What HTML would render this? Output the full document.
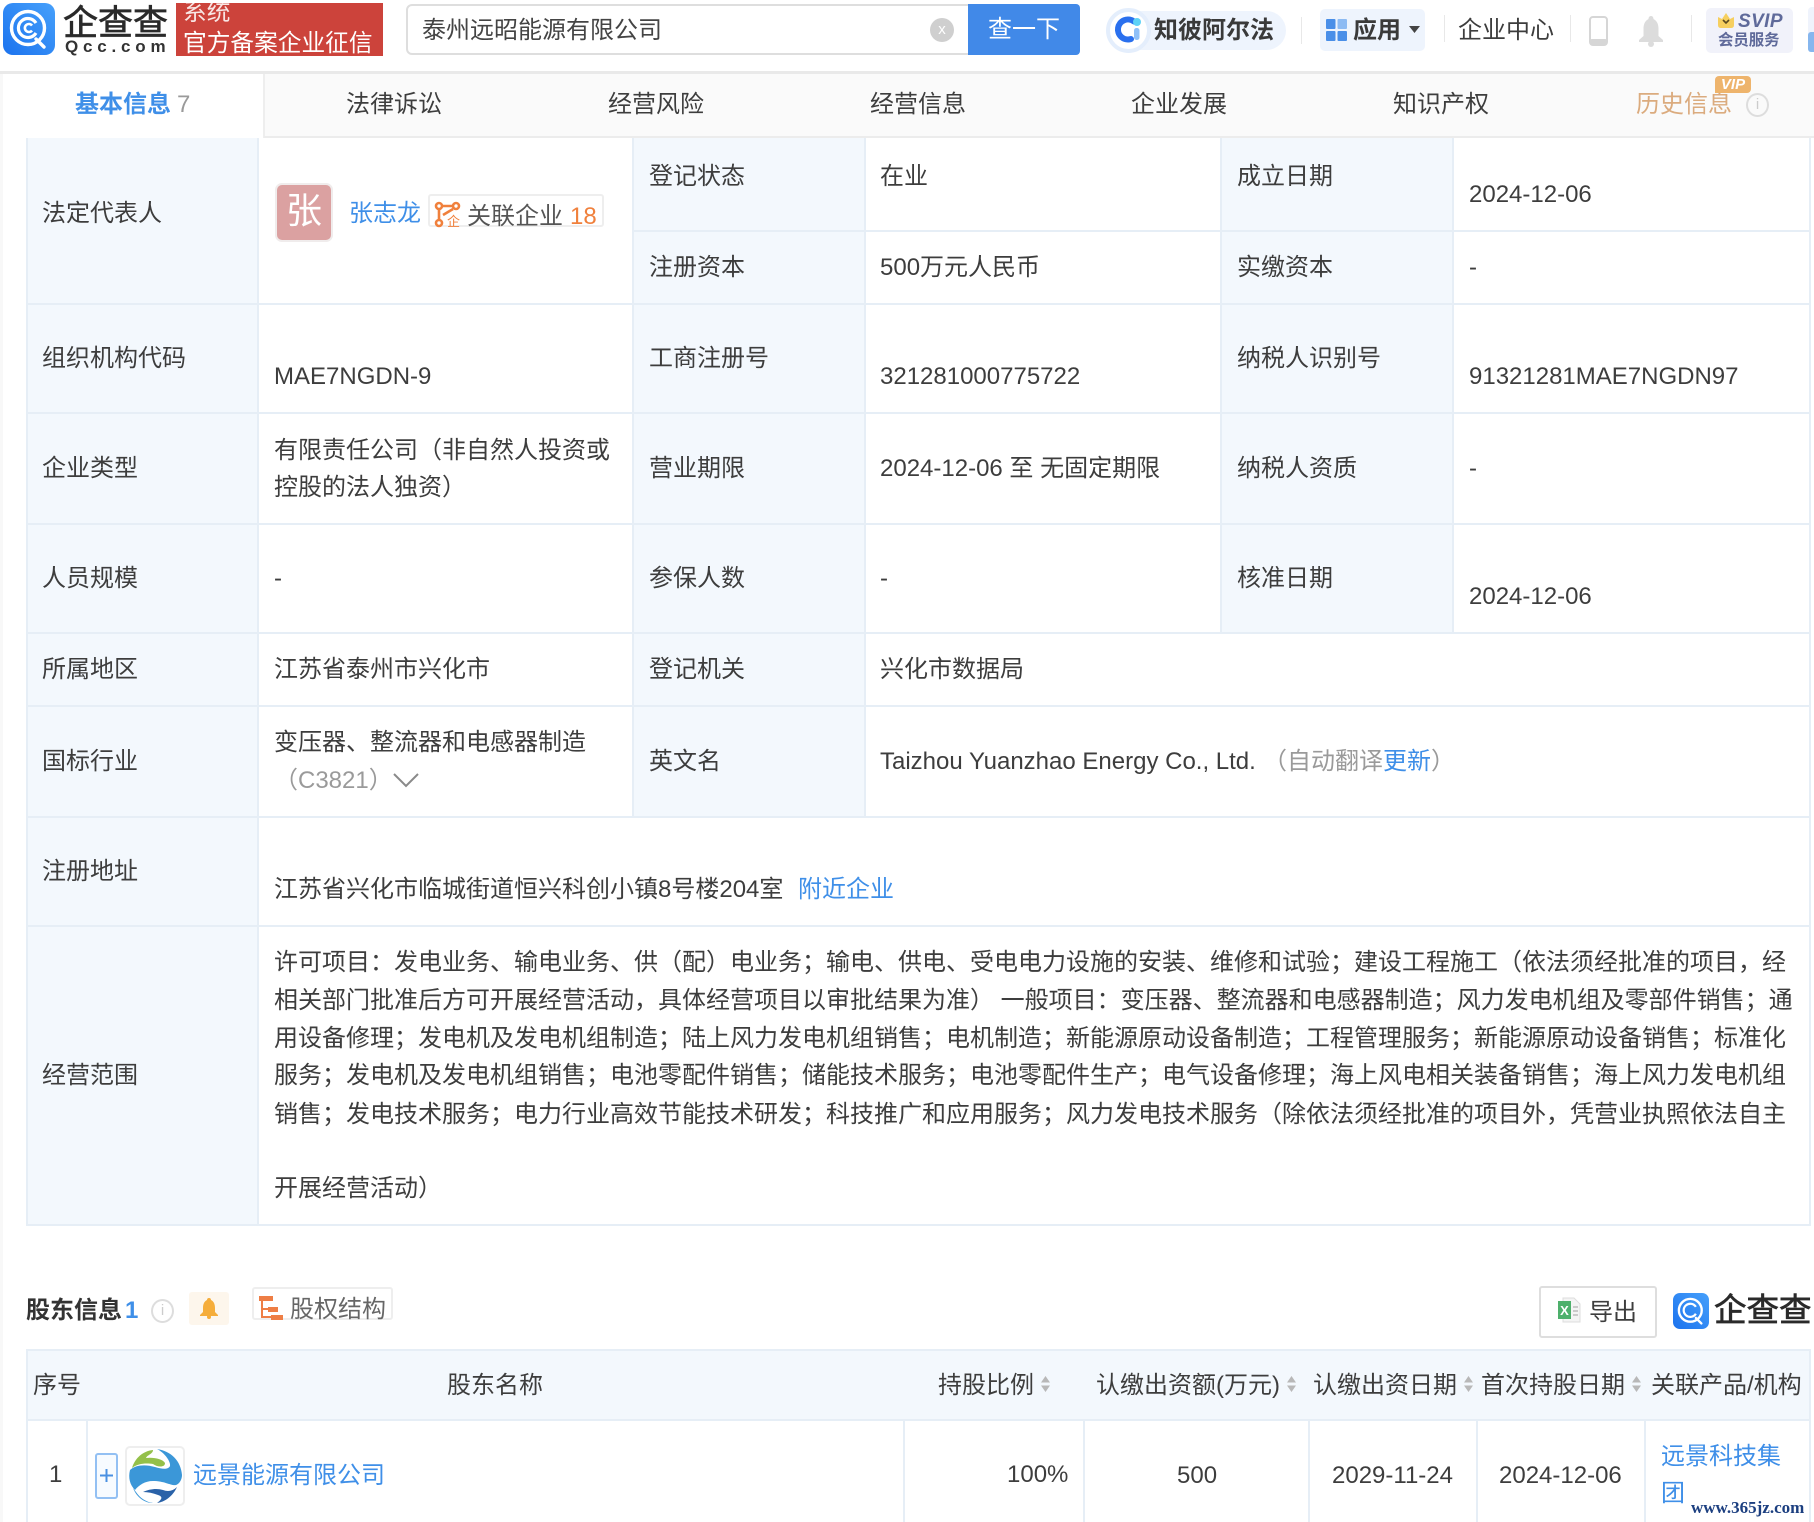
<!DOCTYPE html>
<html lang="zh"><head><meta charset="utf-8"><title>泰州远昭能源有限公司</title>
<style>
html,body{margin:0;padding:0;background:#fff}
#p{position:relative;width:1814px;height:1522px;overflow:hidden;background:#fff;font-family:"Liberation Sans","Noto Sans CJK SC",sans-serif;font-size:24px;color:#3d3d3d;filter:blur(.35px)}
.t{position:absolute;line-height:30px;margin-top:-13px;white-space:nowrap}
.b{position:absolute;box-sizing:border-box}
.l{position:absolute;background:#e6eef6}
.c{color:#3f8fe8}
.g{color:#9a9a9a}
svg{position:absolute;overflow:visible}
</style></head><body><div id="p">

<!-- header -->
<div class="b" style="left:0;top:72px;width:3px;height:1450px;background:#f8f8f8"></div>
<div class="b" style="left:0;top:71px;width:1814px;height:3px;background:#e9e9e9"></div>
<svg style="left:3px;top:3px" width="52" height="52" viewBox="0 0 52 52"><defs><linearGradient id="lg" x1="0" y1="1" x2="1" y2="0"><stop offset="0" stop-color="#1c73ee"/><stop offset="1" stop-color="#46a0fb"/></linearGradient></defs><rect width="52" height="52" rx="10" fill="url(#lg)"/><circle cx="25" cy="25" r="16.5" fill="none" stroke="#fff" stroke-width="3.4"/><path d="M33 36L41 44" stroke="#fff" stroke-width="3.4" stroke-linecap="round"/><path d="M33 20A9.5 9.5 0 1 0 33 30" fill="none" stroke="#fff" stroke-width="3.2"/><path d="M29 22.500A4 4 0 1 0 29 27.500" fill="none" stroke="#fff" stroke-width="2.600"/></svg>
<span class="t" style="left:63px;top:22px;font-size:35px;color:#2a2a2a;-webkit-text-stroke:.7px #2a2a2a">企查查</span>
<span class="t" style="left:65px;top:45px;font-size:17px;letter-spacing:4.8px;color:#333;font-weight:700">Qcc.com</span>
<div class="b" style="left:176px;top:3px;width:207px;height:53px;background:#cc433b;overflow:hidden;color:#fff"><span class="t" style="left:7px;top:8px;color:#f8e6e4;font-size:23.7px">系统</span><span class="t" style="left:7px;top:39px;color:#fff;font-size:23.7px">官方备案企业征信</span></div>

<div class="b" style="left:406px;top:4px;width:564px;height:51px;border:2px solid #dedede;border-radius:6px 0 0 6px"></div>
<span class="t" style="left:422px;top:29px;color:#444">泰州远昭能源有限公司</span>
<div class="b" style="left:930px;top:18px;width:24px;height:24px;border-radius:50%;background:#cfcfcf;color:#fff;font-size:15px;line-height:24px;text-align:center">x</div>
<div class="b" style="left:968px;top:4px;width:112px;height:51px;background:#4189e8;border-radius:0 4px 4px 0;color:#fff;text-align:center;line-height:52px">查一下</div>

<div class="b" style="left:1116px;top:11px;width:170px;height:39px;background:#eef4fd;border-radius:20px"></div>
<div class="b" style="left:1106px;top:8px;width:45px;height:45px;background:#fff;border:4px solid #e4eefc;border-radius:50%"></div>
<svg style="left:1114px;top:15px" width="30" height="30" viewBox="0 0 30 30"><path d="M20 6.500A10 10 0 1 0 17 24" fill="none" stroke="#2a70ee" stroke-width="6" stroke-linecap="round"/><circle cx="23" cy="7" r="4" fill="#5fd2f6"/><rect x="20" y="13" width="5.500" height="12" rx="2.500" fill="#8fc0f8"/></svg>
<span class="t" style="left:1154px;top:29px;font-weight:700;color:#3a3a3a">知彼阿尔法</span>
<div class="b" style="left:1301px;top:17px;width:1px;height:27px;background:#e8e8e8"></div>

<div class="b" style="left:1320px;top:9px;width:105px;height:42px;background:#eef4fd;border-radius:5px"></div>
<svg style="left:1326px;top:19px" width="21" height="22" viewBox="0 0 21 22"><g fill="#4a8fe8"><rect width="9.500" height="10" rx="1"/><rect x="11.500" width="9.500" height="10" rx="1" fill="#8dbbf3"/><rect y="12" width="9.500" height="10" rx="1"/><rect x="11.500" y="12" width="9.500" height="10" rx="1"/></g></svg>
<span class="t" style="left:1353px;top:29px;font-weight:700;color:#3a3a3a">应用</span>
<svg style="left:1409px;top:26px" width="12" height="8" viewBox="0 0 12 8"><path d="M0 0H11L5.500 7Z" fill="#444"/></svg>
<div class="b" style="left:1444px;top:15px;width:1px;height:27px;background:#e8e8e8"></div>
<span class="t" style="left:1458px;top:29px">企业中心</span>
<div class="b" style="left:1570px;top:15px;width:1px;height:27px;background:#e8e8e8"></div>
<svg style="left:1589px;top:16px" width="19" height="30" viewBox="0 0 19 30"><rect x="1" y="1" width="17" height="28" rx="3" fill="#fff" stroke="#d6d6d6" stroke-width="2"/><rect x="1" y="23" width="17" height="6" rx="2" fill="#d6d6d6"/></svg>
<svg style="left:1639px;top:16px" width="24" height="31" viewBox="0 0 24 31"><path d="M12 0C14 0 14.500 2 14.500 3C18.500 5 19.500 9 19.500 13V20L24 24V26H0V24L4.500 20V13C4.500 9 5.500 5 9.500 3C9.500 2 10 0 12 0Z" fill="#dcdcdc"/><circle cx="12" cy="28" r="3" fill="#dcdcdc"/></svg>
<div class="b" style="left:1691px;top:15px;width:1px;height:27px;background:#e8e8e8"></div>
<div class="b" style="left:1706px;top:8px;width:87px;height:45px;background:#f1f2fa;border-radius:5px"></div>
<svg style="left:1718px;top:13px" width="16" height="15" viewBox="0 0 16 15"><path d="M0 4L4 6L8 0L12 6L16 4V12Q16 15 13 15H3Q0 15 0 12Z" fill="#f6cf5f"/><path d="M5 7L8 10L11 7" fill="none" stroke="#5a4a20" stroke-width="1.600"/></svg>
<span class="t" style="left:1738px;top:20px;font-size:19px;font-weight:700;font-style:italic;color:#5f6a9a;letter-spacing:.4px">SVIP</span>
<span class="t" style="left:1718px;top:39px;font-size:15.400px;font-weight:700;color:#5f6a9a">会员服务</span>
<div class="b" style="left:1808px;top:7px;width:6px;height:45px;background:#eff3fc;border-radius:4px 0 0 4px"></div>
<div class="b" style="left:1808px;top:32px;width:6px;height:20px;background:#86b6ee;border-radius:3px 0 0 3px"></div>

<!-- tabs -->
<div class="b" style="left:264px;top:74px;width:1550px;height:63px;background:#fafafa"></div>
<div class="b" style="left:3px;top:74px;width:261px;height:64px;background:#fff"></div>
<div class="b" style="left:263px;top:74px;width:2px;height:64px;background:#eee"></div>
<div class="b" style="left:264px;top:136px;width:1550px;height:2px;background:#ececec"></div>
<span class="t c" style="left:75px;top:103px;font-weight:700">基本信息</span>
<span class="t g" style="left:177px;top:103px">7</span>
<span class="t" style="left:346px;top:103px">法律诉讼</span>
<span class="t" style="left:608px;top:103px">经营风险</span>
<span class="t" style="left:870px;top:103px">经营信息</span>
<span class="t" style="left:1131px;top:103px">企业发展</span>
<span class="t" style="left:1393px;top:103px">知识产权</span>
<span class="t" style="left:1636px;top:103px;color:#dbab7e">历史信息</span>
<div class="b" style="left:1715px;top:76px;width:36px;height:17px;background:#eeb46c;border-radius:4px 4px 4px 0;color:#fff;font-size:15px;font-weight:700;font-style:italic;line-height:17px;text-align:center">VIP</div>
<div class="b" style="left:1746px;top:93px;width:23px;height:24px;border:2px solid #ddd;border-radius:50%;color:#ccc;font-size:15px;line-height:20px;text-align:center">i</div>

<!-- table 1 backgrounds -->
<div class="b" style="left:27px;top:138px;width:231px;height:1086px;background:#f3f8fd"></div>
<div class="b" style="left:633px;top:138px;width:232px;height:679px;background:#f3f8fd"></div>
<div class="b" style="left:1220px;top:138px;width:233px;height:494px;background:#f3f8fd"></div>
<!-- vertical lines -->
<div class="l" style="left:26px;top:138px;width:2px;height:1087px"></div>
<div class="l" style="left:257px;top:138px;width:2px;height:1087px"></div>
<div class="l" style="left:632px;top:138px;width:2px;height:679px"></div>
<div class="l" style="left:864px;top:138px;width:2px;height:679px"></div>
<div class="l" style="left:1220px;top:138px;width:2px;height:495px"></div>
<div class="l" style="left:1452px;top:138px;width:2px;height:495px"></div>
<div class="l" style="left:1809px;top:138px;width:2px;height:1087px"></div>
<!-- horizontal lines -->
<div class="l" style="left:633px;top:230px;width:1178px;height:2px"></div>
<div class="l" style="left:26px;top:303px;width:1785px;height:2px"></div>
<div class="l" style="left:26px;top:412px;width:1785px;height:2px"></div>
<div class="l" style="left:26px;top:523px;width:1785px;height:2px"></div>
<div class="l" style="left:26px;top:632px;width:1785px;height:2px"></div>
<div class="l" style="left:26px;top:705px;width:1785px;height:2px"></div>
<div class="l" style="left:26px;top:816px;width:1785px;height:2px"></div>
<div class="l" style="left:26px;top:925px;width:1785px;height:2px"></div>
<div class="l" style="left:26px;top:1224px;width:1785px;height:2px"></div>

<!-- row 1 -->
<span class="t" style="left:42px;top:212px">法定代表人</span>
<div class="b" style="left:275px;top:183px;width:58px;height:59px;background:#dba1a1;border:2px solid #f0ecec;border-radius:7px;color:#fff;font-size:36px;line-height:51px;text-align:center">张</div>
<span class="t c" style="left:349px;top:212px">张志龙</span>
<div class="b" style="left:428px;top:194px;width:176px;height:33px;border:2px solid #eee;border-radius:3px"></div>
<svg style="left:435px;top:202px" width="25" height="25" viewBox="0 0 25 25"><g fill="none" stroke="#f0803c" stroke-width="2.600"><circle cx="4" cy="4" r="3"/><circle cx="21" cy="4" r="3"/><circle cx="4" cy="21" r="3"/><path d="M7 4H18M4 7V18M18 7L8 13"/></g><text x="12" y="24" font-size="13" fill="#f0803c" font-family="Liberation Sans,Noto Sans CJK SC,sans-serif">企</text></svg>
<span class="t" style="left:467px;top:215px;color:#555">关联企业</span>
<span class="t" style="left:570px;top:215px;color:#f0803c">18</span>
<span class="t" style="left:649px;top:175px">登记状态</span>
<span class="t" style="left:880px;top:175px">在业</span>
<span class="t" style="left:1237px;top:175px">成立日期</span>
<span class="t" style="left:1469px;top:193px">2024-12-06</span>
<span class="t" style="left:649px;top:266px">注册资本</span>
<span class="t" style="left:880px;top:266px">500万元人民币</span>
<span class="t" style="left:1237px;top:266px">实缴资本</span>
<span class="t" style="left:1469px;top:266px">-</span>
<!-- row 2 -->
<span class="t" style="left:42px;top:357px">组织机构代码</span>
<span class="t" style="left:274px;top:375px">MAE7NGDN-9</span>
<span class="t" style="left:649px;top:357px">工商注册号</span>
<span class="t" style="left:880px;top:375px">321281000775722</span>
<span class="t" style="left:1237px;top:357px">纳税人识别号</span>
<span class="t" style="left:1469px;top:375px">91321281MAE7NGDN97</span>
<!-- row 3 -->
<span class="t" style="left:42px;top:467px">企业类型</span>
<span class="t" style="left:274px;top:449px">有限责任公司（非自然人投资或</span>
<span class="t" style="left:274px;top:486px">控股的法人独资）</span>
<span class="t" style="left:649px;top:467px">营业期限</span>
<span class="t" style="left:880px;top:467px">2024-12-06 至 无固定期限</span>
<span class="t" style="left:1237px;top:467px">纳税人资质</span>
<span class="t" style="left:1469px;top:467px">-</span>
<!-- row 4 -->
<span class="t" style="left:42px;top:577px">人员规模</span>
<span class="t" style="left:274px;top:577px">-</span>
<span class="t" style="left:649px;top:577px">参保人数</span>
<span class="t" style="left:880px;top:577px">-</span>
<span class="t" style="left:1237px;top:577px">核准日期</span>
<span class="t" style="left:1469px;top:595px">2024-12-06</span>
<!-- row 5 -->
<span class="t" style="left:42px;top:668px">所属地区</span>
<span class="t" style="left:274px;top:668px">江苏省泰州市兴化市</span>
<span class="t" style="left:649px;top:668px">登记机关</span>
<span class="t" style="left:880px;top:668px">兴化市数据局</span>
<!-- row 6 -->
<span class="t" style="left:42px;top:760px">国标行业</span>
<span class="t" style="left:274px;top:741px">变压器、整流器和电感器制造</span>
<span class="t g" style="left:274px;top:779px">（C3821）</span>
<svg style="left:393px;top:773px" width="26" height="14" viewBox="0 0 26 14"><path d="M1 1L13 13L25 1" fill="none" stroke="#8a8a8a" stroke-width="2"/></svg>
<span class="t" style="left:649px;top:760px">英文名</span>
<span class="t" style="left:880px;top:760px">Taizhou Yuanzhao Energy Co., Ltd.</span>
<span class="t g" style="left:1263px;top:760px">（自动翻译<span class="c">更新</span>）</span>
<!-- row 7 -->
<span class="t" style="left:42px;top:870px">注册地址</span>
<span class="t" style="left:274px;top:888px">江苏省兴化市临城街道恒兴科创小镇8号楼204室</span>
<span class="t c" style="left:798px;top:888px">附近企业</span>
<!-- row 8 -->
<span class="t" style="left:42px;top:1074px">经营范围</span>
<span class="t" style="left:274px;top:961px">许可项目：发电业务、输电业务、供（配）电业务；输电、供电、受电电力设施的安装、维修和试验；建设工程施工（依法须经批准的项目，经</span>
<span class="t" style="left:274px;top:999px">相关部门批准后方可开展经营活动，具体经营项目以审批结果为准） 一般项目：变压器、整流器和电感器制造；风力发电机组及零部件销售；通</span>
<span class="t" style="left:274px;top:1037px">用设备修理；发电机及发电机组制造；陆上风力发电机组销售；电机制造；新能源原动设备制造；工程管理服务；新能源原动设备销售；标准化</span>
<span class="t" style="left:274px;top:1074px">服务；发电机及发电机组销售；电池零配件销售；储能技术服务；电池零配件生产；电气设备修理；海上风电相关装备销售；海上风力发电机组</span>
<span class="t" style="left:274px;top:1113px">销售；发电技术服务；电力行业高效节能技术研发；科技推广和应用服务；风力发电技术服务（除依法须经批准的项目外，凭营业执照依法自主</span>
<span class="t" style="left:274px;top:1187px">开展经营活动）</span>

<!-- section 2 -->
<span class="t" style="left:26px;top:1309px;font-weight:700;color:#333">股东信息</span>
<span class="t c" style="left:125px;top:1309px;font-weight:700">1</span>
<div class="b" style="left:151px;top:1299px;width:23px;height:24px;border:2px solid #ddd;border-radius:50%;color:#ccc;font-size:15px;line-height:20px;text-align:center">i</div>
<div class="b" style="left:189px;top:1292px;width:40px;height:33px;background:#fdf6ec;border-radius:3px"></div>
<svg style="left:199px;top:1298px" width="20" height="21" viewBox="0 0 20 21"><path d="M10 0C11.500 0 12 1 12 2C15 3.500 16 6.500 16 10V14L19 17V18H1V17L4 14V10C4 6.500 5 3.500 8 2C8 1 8.500 0 10 0Z" fill="#f5ad3b"/><circle cx="10" cy="19" r="2" fill="#f5ad3b"/></svg>
<div class="b" style="left:252px;top:1287px;width:141px;height:33px;border:2px solid #eee;border-radius:3px"></div>
<svg style="left:259px;top:1296px" width="24" height="24" viewBox="0 0 24 24"><g fill="#ee7e45"><rect width="14" height="5"/><rect x="2" y="5" width="2" height="17"/><rect x="9" y="11" width="10" height="5"/><rect x="12" y="19" width="12" height="5"/><rect x="2" y="12" width="8" height="2"/><rect x="2" y="20" width="10" height="2"/></g></svg>
<span class="t" style="left:290px;top:1308px;color:#666">股权结构</span>
<div class="b" style="left:1539px;top:1286px;width:118px;height:52px;border:2px solid #dedede;border-radius:3px"></div>
<svg style="left:1558px;top:1298px" width="22" height="24" viewBox="0 0 22 24"><path d="M5 0H16L22 6V24H5Z" fill="#f4f4f4" stroke="#ddd" stroke-width="1"/><rect x="0" y="3" width="13" height="18" fill="#4eb06c"/><text x="6.500" y="17" text-anchor="middle" font-size="13" font-weight="700" fill="#fff" font-family="Liberation Sans,sans-serif">X</text><path d="M15 9H20M15 13H20M15 17H20" stroke="#bbb" stroke-width="1.500"/></svg>
<span class="t" style="left:1589px;top:1311px">导出</span>
<svg style="left:1673px;top:1293px" width="36" height="36" viewBox="0 0 52 52"><rect width="52" height="52" rx="10" fill="url(#lg)"/><circle cx="25" cy="25" r="16.500" fill="none" stroke="#fff" stroke-width="3.400"/><path d="M33 36L41 44" stroke="#fff" stroke-width="3.400" stroke-linecap="round"/><path d="M33 20A9.500 9.500 0 1 0 33 30" fill="none" stroke="#fff" stroke-width="3.200"/></svg>
<span class="t" style="left:1714px;top:1308px;font-size:32.500px;color:#2a2a2a;-webkit-text-stroke:.7px #2a2a2a">企查查</span>

<!-- table 2 -->
<div class="b" style="left:27px;top:1350px;width:1783px;height:70px;background:#f3f8fd"></div>
<div class="l" style="left:26px;top:1349px;width:1785px;height:2px"></div>
<div class="l" style="left:26px;top:1419px;width:1785px;height:2px"></div>
<div class="l" style="left:26px;top:1349px;width:2px;height:173px"></div>
<div class="l" style="left:86px;top:1420px;width:2px;height:102px"></div>
<div class="l" style="left:903px;top:1420px;width:2px;height:102px"></div>
<div class="l" style="left:1083px;top:1420px;width:2px;height:102px"></div>
<div class="l" style="left:1308px;top:1420px;width:2px;height:102px"></div>
<div class="l" style="left:1476px;top:1420px;width:2px;height:102px"></div>
<div class="l" style="left:1644px;top:1420px;width:2px;height:102px"></div>
<div class="l" style="left:1809px;top:1349px;width:2px;height:173px"></div>

<span class="t" style="left:33px;top:1384px">序号</span>
<span class="t" style="left:447px;top:1384px">股东名称</span>
<span class="t" style="left:938px;top:1384px">持股比例</span>
<span class="t" style="left:1096px;top:1384px">认缴出资额(万元)</span>
<span class="t" style="left:1313px;top:1384px">认缴出资日期</span>
<span class="t" style="left:1481px;top:1384px">首次持股日期</span>
<span class="t" style="left:1651px;top:1384px">关联产品/机构</span>
<svg style="left:1041px;top:1376px" width="9" height="16" viewBox="0 0 9 16"><path d="M0 6.500L4.500 0L9 6.500ZM0 9.500L4.500 16L9 9.500Z" fill="#b8b8b8"/></svg>
<svg style="left:1287px;top:1376px" width="9" height="16" viewBox="0 0 9 16"><path d="M0 6.500L4.500 0L9 6.500ZM0 9.500L4.500 16L9 9.500Z" fill="#b8b8b8"/></svg>
<svg style="left:1464px;top:1376px" width="9" height="16" viewBox="0 0 9 16"><path d="M0 6.500L4.500 0L9 6.500ZM0 9.500L4.500 16L9 9.500Z" fill="#b8b8b8"/></svg>
<svg style="left:1632px;top:1376px" width="9" height="16" viewBox="0 0 9 16"><path d="M0 6.500L4.500 0L9 6.500ZM0 9.500L4.500 16L9 9.500Z" fill="#b8b8b8"/></svg>

<span class="t" style="left:49px;top:1473px">1</span>
<div class="b" style="left:95px;top:1453px;width:23px;height:46px;border:2px solid #93c0f3;border-radius:3px;background:#f7fbff"></div>
<svg style="left:100px;top:1469px" width="13" height="13" viewBox="0 0 13 13"><path d="M6.500 0V13M0 6.500H13" stroke="#4a90e2" stroke-width="2"/></svg>
<div class="b" style="left:125px;top:1446px;width:60px;height:60px;border:2px solid #eee;border-radius:5px;background:#fff"></div>
<svg style="left:127px;top:1448px" width="56" height="56" viewBox="0 0 56 56"><path d="M30 1C44 3 54 13 55 27C55 32 52 36 49 37C44 38 38 33 26 33C18 33 12 37 8 42C3 37 1 30 3 22C8 17 18 16 28 19C35 21 41 22 43 18C44 14 38 5 30 1Z" fill="#3b97d8"/><path d="M5 20C8 10 16 3 26 2C26 6 20 7 19 10C26 9 36 11 38 15C38 20 30 19 26 16C20 15 11 15 5 20Z" fill="#94c04a"/><path d="M9 44C14 38 21 36 28 36C36 37 43 41 50 41C44 50 35 55 26 55C19 55 13 50 9 44Z" fill="#fff"/><path d="M16 44C22 41 30 40 36 42C41 44 46 43 50 39C46 48 38 54 30 55C34 52 37 49 31 47C26 45 21 44 16 44Z" fill="#2a62a8"/><path d="M9 44C13 50 19 54 26 55C18 55 10 50 6 40Z" fill="#3b97d8"/></svg>
<span class="t c" style="left:193px;top:1474px">远景能源有限公司</span>
<span class="t" style="left:1007px;top:1473px">100%</span>
<span class="t" style="left:1177px;top:1474px">500</span>
<span class="t" style="left:1332px;top:1474px">2029-11-24</span>
<span class="t" style="left:1499px;top:1474px">2024-12-06</span>
<span class="t c" style="left:1661px;top:1455px">远景科技集</span>
<span class="t c" style="left:1661px;top:1492px">团</span>
<span class="t" style="left:1691px;top:1506px;font-family:'Liberation Serif',serif;font-size:17px;font-weight:700;color:#1c3f80">www.365jz.com</span>
</div></body></html>
